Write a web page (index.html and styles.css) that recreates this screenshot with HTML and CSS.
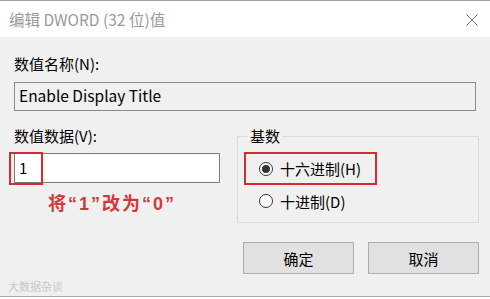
FILE: index.html
```html
<!DOCTYPE html>
<html lang="zh-CN">
  <head>
    <meta charset="UTF-8" />
    <meta name="viewport" content="width=device-width, initial-scale=1.0" />
    <title>编辑 DWORD (32 位)值</title>
    <link rel="stylesheet" href="styles.css">
  </head>
  <body>
    <div class="window">
      <!-- 标题栏 -->
      <div class="titlebar">
        <span class="title">编辑 DWORD (32 位)值</span>
        <svg class="close" width="12" height="12" viewBox="0 0 12 12">
          <path d="M0.5 0.5 L11.5 11.5 M11.5 0.5 L0.5 11.5" stroke="#6d6d6d" stroke-width="1" fill="none" />
        </svg>
      </div>

      <!-- 内容 -->
      <div class="content">
        <div class="label first">数值名称(N):</div>
        <div class="name-box">Enable Display Title</div>

        <div class="row">
          <!-- 数值数据 -->
          <div class="data-col">
            <div class="label">数值数据(V):</div>
            <div class="data-wrap">
              <div class="data-box">1</div>
              <div class="mark"></div>
            </div>
            <div class="note">将“1”改为“0”</div>
          </div>

          <!-- 基数 -->
          <fieldset class="base">
            <legend>基数</legend>
            <div class="radio-row picked">
              <span class="radio on"></span>
              <span>十六进制(H)</span>
            </div>
            <div class="radio-row">
              <span class="radio"></span>
              <span>十进制(D)</span>
            </div>
          </fieldset>
        </div>

        <!-- 按钮 -->
        <div class="buttons">
          <button class="btn">确定</button>
          <button class="btn">取消</button>
        </div>

        <div class="watermark">大数据杂谈</div>
      </div>
    </div>
  </body>
</html>
```

FILE: styles.css
```css
/* 基本初始化 */
* {
  margin: 0;
  padding: 0;
  box-sizing: border-box;
}

body {
  font-family: "Noto Sans CJK SC", "Liberation Sans", sans-serif;
  font-size: 15px;
  color: #000;
  background-color: #fff;
  width: 490px;
  height: 299px;
  overflow: hidden;
}

/* 窗口 */
.window {
  width: 490px;
  height: 297px;
  border-top: 1px solid #a3a3a3;
  border-bottom: 1px solid #a8a8a8;
  display: flex;
  flex-direction: column;
}

/* 标题栏 */
.titlebar {
  height: 36px;
  background-color: #fff;
  display: flex;
  align-items: center;
  justify-content: space-between;
  padding: 0 12px 0 9px;
}

.title {
  font-size: 15.5px;
  color: #999;
  line-height: 20px;
}

.close {
  margin-top: 1px;
}

/* 内容区 */
.content {
  flex: 1;
  background-color: #f0f0f0;
  padding: 17px 11px 0 14px;
  position: relative;
}

.label {
  line-height: 20px;
  height: 20px;
}

.name-box {
  margin-top: 8px;
  width: 462px;
  height: 29px;
  border: 1px solid #8a8a8a;
  background-color: #f0f0f0;
  padding-left: 4px;
  line-height: 24px;
  font-size: 15.5px;
}

.row {
  margin-top: 15px;
  display: grid;
  grid-template-columns: 206px 242px;
  column-gap: 17px;
}

/* 数值数据 */
.data-wrap {
  position: relative;
  margin-top: 7px;
}

.data-box {
  height: 30px;
  border: 1px solid #7a7a7a;
  background-color: #fff;
  padding-left: 4px;
  line-height: 27px;
}

/* 红框标注 */
.mark {
  position: absolute;
  left: -5px;
  top: -1px;
  width: 34px;
  height: 33px;
  border: 2px solid #d42a30;
}

.note {
  margin-top: 10px;
  padding-left: 34px;
  line-height: 22px;
  font-family: "Liberation Sans", "Noto Sans CJK SC", sans-serif;
  font-size: 18px;
  letter-spacing: 2px;
  font-weight: bold;
  color: #d9363a;
}

/* 基数 */
.base {
  margin-top: 1px;
  height: 96px;
  border: 1px solid #dcdcdc;
  padding: 0 0 0 6px;
}

.base legend {
  margin-left: 4px;
  padding: 0 2px;
  line-height: 18px;
}

.radio-row {
  display: flex;
  align-items: center;
  gap: 7px;
  height: 20px;
  padding-left: 15px;
  margin-top: 6px;
}

.radio-row.picked {
  margin-top: 7px;
  width: 133px;
  height: 33px;
  border: 2px solid #d42a30;
  padding-left: 13px;
}

.radio {
  width: 14px;
  height: 14px;
  border: 1px solid #333;
  border-radius: 50%;
  background-color: #fff;
  display: flex;
  align-items: center;
  justify-content: center;
}

.radio.on::after {
  content: "";
  width: 8px;
  height: 8px;
  border-radius: 50%;
  background-color: #333;
}

/* 按钮 */
.buttons {
  margin-top: 19px;
  display: flex;
  justify-content: flex-end;
  gap: 14px;
}

.btn {
  width: 111px;
  height: 32px;
  background-color: #e1e1e1;
  border: 1px solid #adadad;
  font-family: inherit;
  font-size: 15px;
  color: #000;
}

/* 水印 */
.watermark {
  position: absolute;
  left: 8px;
  bottom: 4px;
  font-size: 11px;
  line-height: 12px;
  color: #c8c8c8;
}
```
